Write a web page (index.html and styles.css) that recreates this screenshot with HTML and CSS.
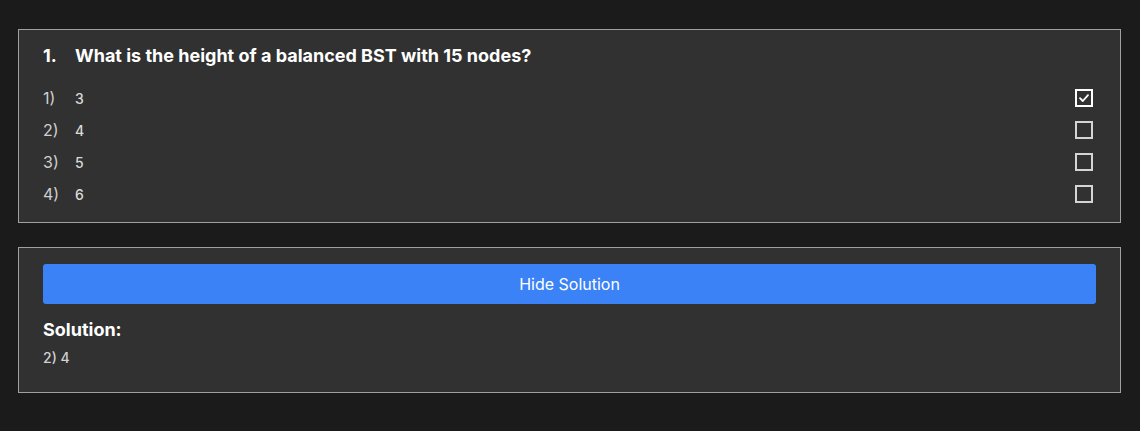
FILE: index.html
```html
<!DOCTYPE html>
<html lang="en">
<head>
<meta charset="utf-8">
<title>Quiz</title>
<link rel="stylesheet" href="styles.css">
</head>
<body>
<main class="page">
  <section class="card question">
    <h2 class="q-title"><span class="q-num">1.</span><span class="q-text">What is the height of a balanced BST with 15 nodes?</span></h2>
    <ul class="options">
      <li class="option"><span class="opt-num">1)</span><span class="opt-text">3</span><span class="box checked"><svg viewBox="0 0 14 14" width="14" height="14"><path d="M3 7.2 L5.8 10 L11 4.2" fill="none" stroke="#fff" stroke-width="1.8" stroke-linecap="round" stroke-linejoin="round"/></svg></span></li>
      <li class="option"><span class="opt-num">2)</span><span class="opt-text">4</span><span class="box"></span></li>
      <li class="option"><span class="opt-num">3)</span><span class="opt-text">5</span><span class="box"></span></li>
      <li class="option"><span class="opt-num">4)</span><span class="opt-text">6</span><span class="box"></span></li>
    </ul>
  </section>
  <section class="card solution">
    <button class="btn">Hide Solution</button>
    <h3 class="sol-title">Solution:</h3>
    <p class="sol-text">2) 4</p>
  </section>
</main>
</body>
</html>
```
FILE: styles.css
```css
* { box-sizing: border-box; }
html, body { margin: 0; padding: 0; }
body {
  background: #1b1b1b;
  font-family: Inter, "Noto Sans", sans-serif;
  color: #fff;
}
.page {
  padding: 29px 19px 0 18px;
  display: flex;
  flex-direction: column;
  gap: 24px;
}
.card {
  background: #313131;
  border: 1px solid #a0a0a0;
}
.question { padding: 16px 27px 16px 24px; }
.q-title {
  margin: 0;
  display: flex;
  font-size: 18px;
  line-height: 20px;
  font-weight: 700;
  color: #fff;
}
.q-num { width: 32px; }
.options {
  list-style: none;
  margin: 20px 0 0;
  padding: 0;
  display: flex;
  flex-direction: column;
  gap: 8px;
}
.option {
  display: flex;
  align-items: center;
  height: 24px;
}
.opt-num {
  width: 32px;
  font-size: 16px;
  color: #cfcfcf;
}
.opt-text {
  flex: 1;
  font-size: 14px;
  font-weight: 500;
  color: #dadada;
}
.box {
  width: 18px;
  height: 18px;
  border: 2px solid #d4d4d4;
  display: flex;
  align-items: center;
  justify-content: center;
}
.box.checked { border-color: #fff; }
.solution { padding: 16px 24px 24px; }
.btn {
  display: block;
  width: 100%;
  height: 40px;
  border: 0;
  border-radius: 3px;
  background: #3b82f6;
  color: #fff;
  font-family: Inter, "Noto Sans", sans-serif;
  font-size: 16px;
}
.sol-title {
  margin: 14px 0 0;
  font-size: 18px;
  line-height: 24px;
  font-weight: 700;
}
.sol-text {
  margin: 6px 0 0;
  font-size: 14px;
  line-height: 20px;
  font-weight: 500;
  color: #d0d0d0;
}
```
